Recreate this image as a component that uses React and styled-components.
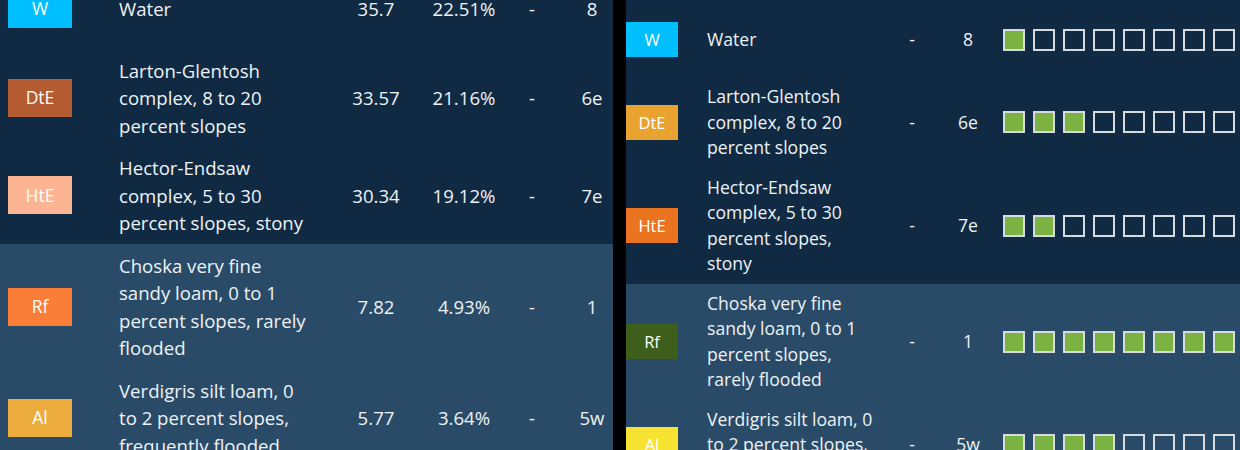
import styled, {createGlobalStyle} from 'styled-components';

const soils = [
  {sym: 'W', name: 'Water', acres: '35.7', pct: '22.51%', cls: '8', filled: 1, leftColor: '#00bfff', rightColor: '#00bfff'},
  {sym: 'DtE', name: 'Larton-Glentosh complex, 8 to 20 percent slopes', acres: '33.57', pct: '21.16%', cls: '6e', filled: 3, leftColor: '#b55b31', rightColor: '#e9a331'},
  {sym: 'HtE', name: 'Hector-Endsaw complex, 5 to 30 percent slopes, stony', acres: '30.34', pct: '19.12%', cls: '7e', filled: 2, leftColor: '#fdb492', rightColor: '#ea741f'},
  {sym: 'Rf', name: 'Choska very fine sandy loam, 0 to 1 percent slopes, rarely flooded', acres: '7.82', pct: '4.93%', cls: '1', filled: 8, leftColor: '#fa7d38', rightColor: '#3e5f1b', light: true},
  {sym: 'Al', name: 'Verdigris silt loam, 0 to 2 percent slopes, frequently flooded', acres: '5.77', pct: '3.64%', cls: '5w', filled: 4, leftColor: '#ecab3d', rightColor: '#f6e332', light: true},
];

export default function App() {
  return (
    <>
      <GlobalStyle />
      <Screen>
        <Panel $width="613px">
          <Table $offset="-32px">
            {soils.map(soil => (
              <WideRow key={soil.sym} $light={soil.light}>
                <BadgeCell>
                  <Badge $color={soil.leftColor} $w="64px" $h="38px" $size="17.5px">{soil.sym}</Badge>
                </BadgeCell>
                <WideName>{soil.name}</WideName>
                <Num>{soil.acres}</Num>
                <Num>{soil.pct}</Num>
                <Num>-</Num>
                <ClassCell>{soil.cls}</ClassCell>
              </WideRow>
            ))}
          </Table>
        </Panel>
        <Panel $width="614px">
          <Table $offset="2px">
            {soils.map(soil => (
              <NarrowRow key={soil.sym} $light={soil.light}>
                <Badge $color={soil.rightColor} $w="52px" $h="35px" $size="16.5px">{soil.sym}</Badge>
                <NarrowName>{soil.name}</NarrowName>
                <Num>-</Num>
                <Num>{soil.cls}</Num>
                <Meter>
                  {Array.from({length: 8}, (_, i) => (
                    <Box key={i} $on={i < soil.filled} />
                  ))}
                </Meter>
              </NarrowRow>
            ))}
          </Table>
        </Panel>
      </Screen>
    </>
  );
}

const GlobalStyle = createGlobalStyle`
  body {
    margin: 0;
    background: #000;
    font-family: "Open Sans", "Liberation Sans", sans-serif;
    color: #eef2f5;
  }
`;

const Screen = styled.div`
  display: flex;
  justify-content: space-between;
  width: 1240px;
  height: 450px;
  overflow: hidden;
  background: #000;
`;

const Panel = styled.div`
  width: ${p => p.$width};
  height: 450px;
  overflow: hidden;
  background: #112a43;
`;

const Table = styled.div`
  margin-top: ${p => p.$offset};
`;

const WideRow = styled.div`
  display: grid;
  grid-template-columns: 104px 232px 80px 96px 40px 61px;
  align-items: center;
  min-height: 81px;
  padding: 7.5px 0;
  box-sizing: border-box;
  font-size: 18.6px;
  line-height: 27.5px;
  background: ${p => (p.$light ? '#2a4b68' : '#112a43')};
`;

const NarrowRow = styled.div`
  display: grid;
  grid-template-columns: 81px 180px 50px 62px auto;
  align-items: center;
  min-height: 75px;
  padding: 7px 0;
  box-sizing: border-box;
  font-size: 17.6px;
  line-height: 25.5px;
  background: ${p => (p.$light ? '#2a4b68' : '#112a43')};
`;

const BadgeCell = styled.div`
  padding-left: 8px;
`;

const Badge = styled.div`
  display: flex;
  align-items: center;
  justify-content: center;
  width: ${p => p.$w};
  height: ${p => p.$h};
  background: ${p => p.$color};
  color: #fff;
  font-size: ${p => p.$size};
`;

const WideName = styled.div`
  padding: 0 27px 0 15px;
`;

const NarrowName = styled.div`
  padding-right: 10px;
`;

const Num = styled.div`
  text-align: center;
`;

const ClassCell = styled.div`
  padding-left: 19px;
  text-align: center;
`;

const Meter = styled.div`
  display: flex;
  gap: 8px;
  padding-left: 4px;
`;

const Box = styled.span`
  width: 22px;
  height: 22px;
  box-sizing: border-box;
  border: 2px solid #d6dbe0;
  background: ${p => (p.$on ? '#7ab341' : 'transparent')};
`;
